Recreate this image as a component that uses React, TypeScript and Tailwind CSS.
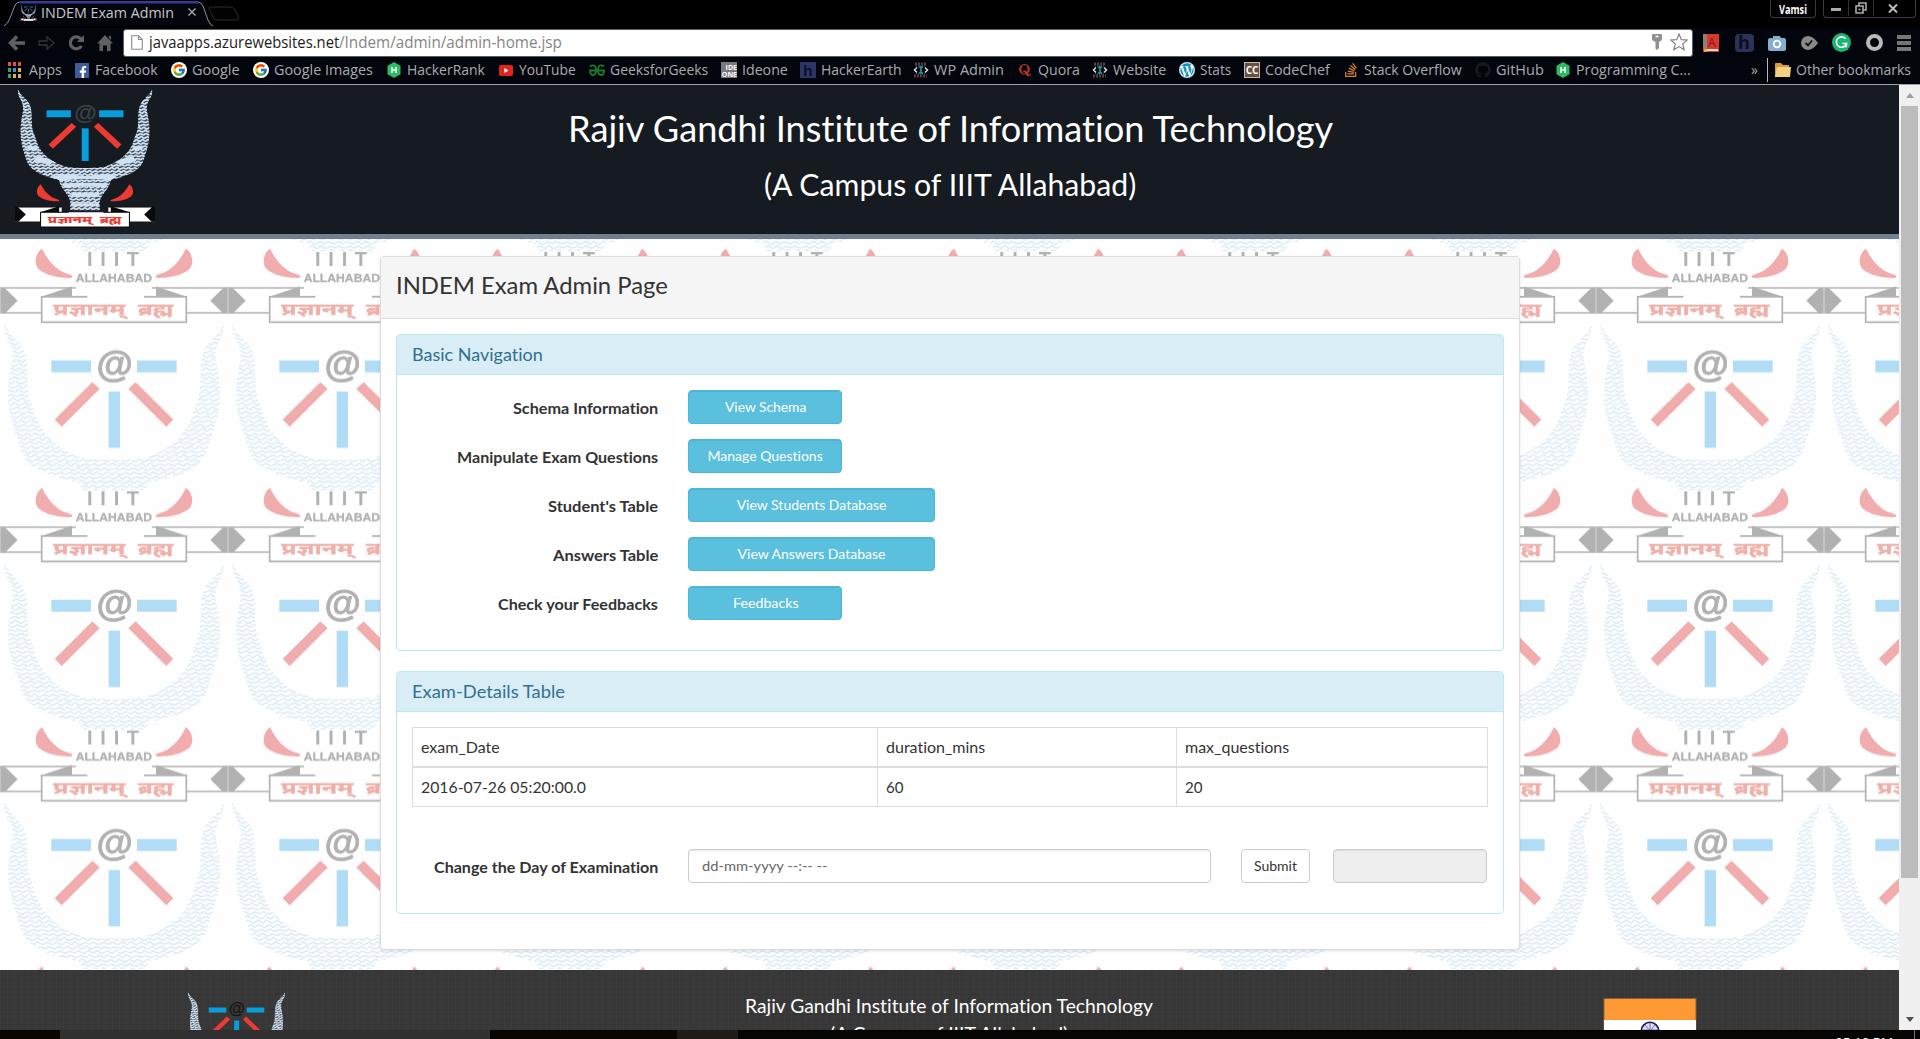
import { useLayoutEffect, useRef, useState, useId } from 'react';
import type { ReactNode } from 'react';
import { FaFacebookF, FaWordpress, FaStackOverflow, FaGithub, FaQuora } from 'react-icons/fa';
import { FcGoogle } from 'react-icons/fc';

/** Text squeezed or stretched to a given width. */
function Fit({ w, className = '', children }: { w: number; className?: string; children: ReactNode }) {
  const ref = useRef<HTMLSpanElement>(null);
  const [k, setK] = useState(1);
  useLayoutEffect(() => {
    if (ref.current && ref.current.offsetWidth) setK(w / ref.current.offsetWidth);
  }, [w]);
  return (
    <span className="inline-block shrink-0 whitespace-nowrap" style={{ width: w }}>
      <span ref={ref} className={'inline-block origin-left whitespace-nowrap ' + className} style={{ transform: `scaleX(${k})` }}>
        {children}
      </span>
    </span>
  );
}

type Palette = { gray: string; red: string; blue: string; wave: string; ribbon: string; text: string; at: string; name: boolean };
const faded: Palette = { gray: '#b1b1b1', red: '#f1adad', blue: '#b0dcf6', wave: '#dfebf7', ribbon: '#ffffff', text: '#f0b0aa', at: '#b1b1b1', name: true };
const vivid: Palette = { gray: '#0a0a0a', red: '#ee3a32', blue: '#0a9ddb', wave: '#cfe1f3', ribbon: '#ffffff', text: '#ee3a32', at: '#3c4246', name: false };

function waveRows(step: number) {
  const rows: string[] = [];
  for (let y = -6, i = 0; y < 640; y += step, i++) {
    let d = `M${-((i * 23) % 56)} ${y}`;
    for (let x = 0; x < 14; x++) {
      const a = 5 + ((i * 7 + x * 5) % 4);
      d += ` q7 ${-a} 14 0 q8 ${a} 13 -1 q6 ${-a} 12 1 q9 ${a} 17 0`;
    }
    rows.push(d);
  }
  return rows.join(' ');
}

/** Institute crest, drawn on a 684 x 718 grid. */
function Crest({ p, motto = true }: { p: Palette; motto?: boolean }) {
  const id = 'c' + useId().replace(/[^a-zA-Z0-9]/g, '');
  const half = 'M14 0 C24 34 60 50 72 80 C92 130 70 190 98 245 C110 290 125 335 190 375 C240 410 290 408 342 408 L342 ';
  const horn = p.name
    ? half + '500 L250 500 L235 474 C180 470 90 440 66 390 C50 330 22 280 24 200 C26 130 50 100 30 60 C18 40 10 20 14 0Z'
    : half + '628 L270 628 L270 580 C260 540 225 520 215 470 C150 455 85 430 60 380 C45 330 22 280 28 190 C32 130 50 100 30 60 C18 40 10 20 14 0Z';
  const eye = 'M126 492 C104 508 102 540 116 554 C140 575 185 581 212 580 C222 578 216 571 206 569 C170 560 145 530 126 492Z';
  const mirror = 'translate(684 0) scale(-1 1)';
  const side = (
    <>
      <path d={eye} fill={p.red} />
      <path d="M0 610H228V637H125V685H0Z" fill={p.ribbon} />
      <path d={p.name ? 'M0 610H228M0 685H125' : 'M0 610H228'} stroke={p.gray} strokeWidth={4.5} fill="none" />
      <path d="M122 637L216 606V637Z" fill={p.gray} />
      <path d="M0 610H14L53 648L16 686H0Z" fill={p.gray} />
      <path d="M154 110H273V146H154Z" fill={p.blue} />
      <path d="M277 175L299 195L185 309L164 287Z" fill={p.red} />
    </>
  );
  return (
    <g>
      <clipPath id={id}>
        <path d={horn} />
        <path d={horn} transform={mirror} />
      </clipPath>
      <g clipPath={`url(#${id})`}>
        {!p.name && <path d={horn} fill="#aabccd" opacity={0.3} />}
        {!p.name && <path d={horn} fill="#aabccd" opacity={0.3} transform={mirror} />}
        <path d={waveRows(p.name ? 13 : 16)} stroke={p.wave} strokeWidth={p.name ? 5 : 9} fill="none" />
        {!p.name && (
          <path
            d="M180 448Q260 436 342 450Q430 438 500 446L470 472Q342 456 215 474ZM225 492Q342 478 455 490L440 508Q342 496 245 510ZM110 345L190 372L170 392L90 372ZM574 345L494 372L514 392L594 372ZM60 290L105 300L112 318L60 310ZM624 290L579 300L572 318L624 310ZM275 535H410V556H275ZM275 590H410V606H275Z"
            fill={p.wave}
          />
        )}
      </g>
      {side}
      <g transform={mirror}>{side}</g>
      {p.name && <path d="M0 608V688M684 608V688" stroke="#d8d8d8" strokeWidth={3} />}
      <path d="M326 203H360V372H326Z" fill={p.blue} />
      <text x={344} y={160} textAnchor="middle" fontFamily="Liberation Sans" fontWeight={700} fontSize={112} fill={p.at} stroke={p.at} strokeWidth={p.name ? 2.5 : 0}>@</text>
      {p.name && (
        <>
          <text x="261 301 341 380" y={543} fontFamily="Liberation Sans" fontWeight={700} fontSize={60} fill={p.gray}>IIIT</text>
          <text x={227} y={591} textLength={229} lengthAdjust="spacingAndGlyphs" fontFamily="Liberation Sans" fontWeight={700} fontSize={34} fill={p.gray} stroke={p.gray} strokeWidth={0.8}>ALLAHABAD</text>
        </>
      )}
      <path d="M125 637H559V713H125Z" fill={p.ribbon} />
      <path d="M262 637H125V713H559V637H432" stroke={p.gray} strokeWidth={5} fill="none" />
      {motto && (
        <g fontFamily="Noto Sans, Noto Sans Devanagari, sans-serif" fontWeight={700} fontSize={46} fill={p.text} stroke={p.text} strokeWidth={1}>
          <text x={160} y={690} textLength={216} lengthAdjust="spacingAndGlyphs">प्रज्ञानम्</text>
          <text x={414} y={690} textLength={106} lengthAdjust="spacingAndGlyphs">ब्रह्म</text>
        </g>
      )}
    </g>
  );
}

function Backdrop() {
  return (
    <svg className="absolute inset-0 h-full w-full" aria-hidden="true">
      <defs>
        <pattern id="crest-tile" width={228} height={239.3} y={-154.5} patternUnits="userSpaceOnUse">
          <g transform="scale(0.33333)">
            <Crest p={faded} />
          </g>
        </pattern>
      </defs>
      <rect width="100%" height="100%" fill="#fefefe" />
      <rect width="100%" height="100%" fill="url(#crest-tile)" />
    </svg>
  );
}

const Hex = () => (
  <svg width="16" height="16" viewBox="0 0 16 16"><path d="M8 0L14.5 3.7V12.3L8 16L1.5 12.3V3.7Z" fill="#2ebc62" /><path d="M6 5V11M10 5V11M6 8H10" stroke="#fff" strokeWidth="1.5" /></svg>
);
const GoogleIcon = () => (
  <span className="flex h-4 w-4 items-center justify-center rounded-full bg-white"><FcGoogle size={14} /></span>
);
const CodeIcon = () => (
  <svg width="16" height="16" viewBox="0 0 16 16">
    <path d="M2 2H14M1 14H14" stroke="#5a3c42" strokeWidth="3" strokeDasharray="2 1" />
    <path d="M3 4H13M3 12H13" stroke="#4a4a50" strokeWidth="1.5" strokeDasharray="1 1" />
    <path d="M4 5.5L1.5 8L4 10.5M12 5.5L14.5 8L12 10.5" stroke="#ddd" strokeWidth="1.5" fill="none" />
    <path d="M6 5H10M8 5V11M6 11H10" stroke="#16a8a0" strokeWidth="1.6" />
  </svg>
);
const GeeksIcon = () => (
  <svg width="16" height="12" viewBox="0 0 16 12" fill="none" stroke="#1f7a2e" strokeWidth="1.8">
    <path d="M1 2.5Q3 .8 5 1.5Q7 2.5 7 6Q7 11 4 11Q1 11 1 6.5H15Q15 11 12 11Q9 11 9 6Q9 2.5 11 1.5Q13 .8 15 2.5" />
  </svg>
);
const AppsIcon = () => (
  <span className="grid grid-cols-3 gap-[2px]">
    {['bg-[#d8524a]', 'bg-[#d8524a]', 'bg-[#d8524a]', 'bg-[#3da35d]', 'bg-[#4a86d8]', 'bg-[#e0b040]', 'bg-[#3da35d]', 'bg-[#e0b040]', 'bg-[#e0b040]'].map((c, i) => (
      <span key={i} className={'h-[4px] w-[3px] ' + c} />
    ))}
  </span>
);

const bookmarks: { label: string; slot: number; w: number; icon: ReactNode }[] = [
  { label: 'Apps', slot: 66, w: 33, icon: <span className="-ml-1"><AppsIcon /></span> },
  { label: 'Facebook', slot: 97, w: 63, icon: <span className="flex h-[15px] w-[14px] items-end justify-end bg-[#3f5c9a] text-white"><FaFacebookF size={12} /></span> },
  { label: 'Google', slot: 82, w: 48, icon: <GoogleIcon /> },
  { label: 'Google Images', slot: 133, w: 99, icon: <GoogleIcon /> },
  { label: 'HackerRank', slot: 112, w: 78, icon: <Hex /> },
  { label: 'YouTube', slot: 91, w: 57, icon: <svg width="14" height="11" viewBox="0 0 14 11"><rect width="14" height="11" rx="2" fill="#e2231a" /><path d="M5.3 3V8L9.5 5.5Z" fill="#fff" /></svg> },
  { label: 'GeeksforGeeks', slot: 132, w: 98, icon: <GeeksIcon /> },
  { label: 'Ideone', slot: 79, w: 46, icon: <span className="flex h-4 w-4 flex-col items-end justify-end bg-[#77787a] text-[7px] leading-[7px] font-bold text-white"><span>IDE</span><span>ONE</span></span> },
  { label: 'HackerEarth', slot: 113, w: 80, icon: <span className="flex h-4 w-4 items-center justify-center bg-[#2c3566] text-[15px] font-bold text-[#0c1028]">h</span> },
  { label: 'WP Admin', slot: 104, w: 70, icon: <CodeIcon /> },
  { label: 'Quora', slot: 75, w: 42, icon: <FaQuora size={14} color="#b5301f" /> },
  { label: 'Website', slot: 87, w: 53, icon: <CodeIcon /> },
  { label: 'Stats', slot: 65, w: 31, icon: <span className="flex rounded-full bg-white text-[#1590c2]"><FaWordpress size={16} /></span> },
  { label: 'CodeChef', slot: 99, w: 65, icon: <span className="flex h-4 w-4 items-center justify-center border border-[#c8b8a8] bg-[#6a5040] text-[10px] font-bold text-white">CC</span> },
  { label: 'Stack Overflow', slot: 132, w: 98, icon: <FaStackOverflow size={16} color="#d8802e" /> },
  { label: 'GitHub', slot: 80, w: 48, icon: <FaGithub size={16} color="#16191d" /> },
  { label: 'Programming C...', slot: 140, w: 115, icon: <Hex /> },
];

function Chrome() {
  return (
    <div className="relative h-[85px] shrink-0 border-b border-[#9aa0a4] bg-[#02050c] font-['Open_Sans',sans-serif] text-[#a9acaf]">
      <div className="flex h-[28px] items-start justify-between bg-black">
        <div className="relative flex h-[24px] w-[250px] items-center">
          <svg className="absolute inset-0" width="250" height="27">
            <path d="M4 26Q8 24 10 18L15 5Q17 2 20 2H198Q201 2 203 6L208 20Q210 25 213 26" fill="#02050c" stroke="#8d9094" strokeWidth="1" />
            <path d="M19 2.5H199" stroke="#3038a8" strokeWidth="2" />
            <path d="M209 9Q208 7 212 7H230Q234 7 235 10L239 18Q239 20 236 20H218Q214 20 213 17Z" fill="#020202" stroke="#2c2c2c" />
          </svg>
          <div className="relative flex items-center">
            <svg className="ml-5" width="17" height="17" viewBox="0 0 684 718"><Crest p={vivid} motto={false} /></svg>
            <Fit w={133} className="ml-1 text-[15px] leading-[20px] text-[#c8c8c8]">INDEM Exam Admin</Fit>
            <svg className="ml-[18px]" width="8" height="8" viewBox="0 0 8 8"><path d="M0.5 0.5L7.5 7.5M7.5 0.5L0.5 7.5" stroke="#aaa" strokeWidth="1.4" /></svg>
          </div>
        </div>
        <div className="flex gap-[7px] pr-[4px]">
          <div className="flex h-[18px] w-[46px] items-center justify-center rounded-b border border-t-0 border-[#3c3c3c] pb-px text-white">
            <Fit w={28} className="text-[11.5px] leading-[15px] font-bold">Vamsi</Fit>
          </div>
          <div className="flex h-[18px] w-[93px] rounded-b border border-t-0 border-[#3c3c3c] pb-px text-[#aaa]">
            <span className="flex w-[25px] items-center justify-center border-r border-[#333]"><span className="mt-[3px] h-[3px] w-[10px] bg-[#aaa]" /></span>
            <span className="flex w-[25px] items-center justify-center border-r border-[#333]">
              <svg width="12" height="12" viewBox="0 0 12 12" fill="none" stroke="#aaa" strokeWidth="1.6"><path d="M1 4H8V11H1ZM4 4V1H11V8H8" /><path d="M3.5 7.5H5.5" /></svg>
            </span>
            <span className="flex flex-1 items-center justify-center pr-1">
              <svg width="10" height="9" viewBox="0 0 10 9"><path d="M1 0.5L9 8.5M9 0.5L1 8.5" stroke="#bbb" strokeWidth="2" /></svg>
            </span>
          </div>
        </div>
      </div>

      <div className="flex h-[29px] items-center">
        <div className="flex w-[123px] shrink-0 items-center gap-[12px] pl-[8px]">
          <svg width="18" height="16" viewBox="0 0 18 16"><path d="M9 1.5L2.5 8L9 14.5M3 8H17" stroke="#606060" strokeWidth="3.6" fill="none" /></svg>
          <svg width="18" height="16" viewBox="0 0 18 16"><path d="M1 6H9V2L16 8L9 14V10H1Z" stroke="#333" strokeWidth="1.3" fill="none" /></svg>
          <svg width="17" height="16" viewBox="0 0 17 16"><path d="M13 4A6 6 0 1 0 13.5 11" stroke="#606060" strokeWidth="3.2" fill="none" /><path d="M16 0V7H9Z" fill="#606060" /></svg>
          <svg width="16" height="16" viewBox="0 0 16 16"><path d="M8 0L16 8.5H13.5V16H10V10.5H6V16H2.5V8.5H0L8 0M12 1H14V5L12 3Z" fill="#606060" /></svg>
        </div>
        <div className="flex h-[28px] w-[1570px] shrink-0 items-center rounded-[3px] border border-[#5a5e60] bg-white pr-[4px] pb-px pl-[7px]">
          <svg width="12" height="15" viewBox="0 0 12 15"><path d="M.7 .7H7.5L11.3 4.5V14.3H.7ZM7.5 .7V4.5H11.3" fill="#fff" stroke="#8a8a8a" strokeWidth="1.1" /></svg>
          <span className="ml-[6px]"><Fit w={190} className="text-[15.5px] leading-[22px] text-[#1c1c1c]">javaapps.azurewebsites.net</Fit></span>
          <Fit w={223} className="text-[15.5px] leading-[22px] text-[#858585]">/Indem/admin/admin-home.jsp</Fit>
          <span className="flex-1" />
          <svg className="mr-[8px]" width="10" height="16" viewBox="0 0 10 16"><path d="M1 0H9Q10 0 10 1V6L7 8V14L5 16L3.5 14.5V8L0 6V1Q0 0 1 0ZM3.5 1.8V3.2H6.5V1.8Z" fill="#8f8f8f" fillRule="evenodd" /></svg>
          <svg width="18" height="18" viewBox="0 0 18 18"><path d="M9 1L11.3 6.6L17.2 7L12.7 10.9L14.2 16.8L9 13.6L3.8 16.8L5.3 10.9L.8 7L6.7 6.6Z" fill="#fff" stroke="#7c7c7c" strokeWidth="1.1" /></svg>
        </div>
        <div className="flex flex-1 items-center justify-between pr-[9px] pl-[9px]">
          <svg width="18" height="18" viewBox="0 0 18 18"><path d="M1 0H17V18H1Z" fill="#d8382e" /><path d="M1 0H5V15H1Z" fill="#8c8078" /><path d="M2 15H16V17H2Z" fill="#ddd" /><path d="M2 15H5V18H2Z" fill="#e6b41e" /><text x="6" y="13" fontFamily="Open Sans" fontSize="12" fill="#8c1512">A</text></svg>
          <span className="flex h-[18px] w-[19px] items-center justify-center rounded-sm bg-[#2c3157] text-[18px] font-bold text-[#0b0e22]">h</span>
          <svg width="18" height="16" viewBox="0 0 18 16"><path d="M2 3H5V1H12L13 3H16Q18 3 18 5V14Q18 16 16 16H2Q0 16 0 14V5Q0 3 2 3Z" fill="#87aed0" /><circle cx="9" cy="9" r="3.3" fill="#87aed0" stroke="#fff" strokeWidth="1.8" /></svg>
          <svg width="17" height="14" viewBox="0 0 17 14"><path d="M7 0Q12 0 17 7Q12 14 7 14A7 7 0 0 1 7 0Z" fill="#898989" /><path d="M4.5 7L7 9.5L11 4.5" stroke="#111" strokeWidth="1.8" fill="none" /></svg>
          <span className="flex h-[19px] w-[19px] items-center justify-center rounded-full bg-[#19b573]">
            <svg width="13" height="13" viewBox="0 0 13 13"><path d="M10.5 2.6A5.2 5.2 0 1 0 11.6 7.5H7.5M11.6 7.5L11 11.5" stroke="#fff" strokeWidth="1.6" fill="none" /></svg>
          </span>
          <span className="h-[17px] w-[17px] rounded-full border-4 border-[#b9b9b9]" />
          <span className="flex flex-col gap-[2px]">
            <span className="h-[4px] w-[14px] bg-[#777]" /><span className="h-[4px] w-[14px] bg-[#777]" /><span className="h-[4px] w-[14px] bg-[#777]" />
          </span>
        </div>
      </div>

      <div className="flex h-[26px] items-center pl-[8px] text-[14.5px] leading-[20px]">
        {bookmarks.map((b) => (
          <div key={b.label} className="flex shrink-0 items-center gap-[5px]" style={{ width: b.slot }}>
            <span className="flex w-[16px] shrink-0 items-center justify-center">{b.icon}</span>
            <Fit w={b.w}>{b.label}</Fit>
          </div>
        ))}
        <span className="flex-1" />
        <span className="mr-[9px] text-[14px]">»</span>
        <span className="h-[24px] w-px bg-[#b8b8b8]" />
        <svg className="ml-[7px]" width="16" height="14" viewBox="0 0 16 14"><path d="M0 1Q0 0 1 0H6L8 2H14V14H0Z" fill="#d59c40" /><path d="M2 4H16L15 14H0Z" fill="#f5d083" /></svg>
        <span className="mr-[9px] ml-[5px]"><Fit w={115}>Other bookmarks</Fit></span>
      </div>
    </div>
  );
}

function Scrollbar() {
  return (
    <div className="flex w-[21px] shrink-0 flex-col items-center bg-[#f0f0f0]">
      <span className="flex h-[21px] items-center"><svg width="8" height="5" viewBox="0 0 8 5"><path d="M4 0L8 5H0Z" fill="#a0a0a0" /></svg></span>
      <span className="h-[772px] w-[17px] bg-[#bcbcbc]" />
      <span className="flex-1" />
      <span className="flex h-[22px] items-center"><svg width="8" height="5" viewBox="0 0 8 5"><path d="M4 5L8 0H0Z" fill="#505050" /></svg></span>
    </div>
  );
}

const navRows = [
  { label: 'Schema Information', lw: 145, button: 'View Schema', bw: 81, wide: false },
  { label: 'Manipulate Exam Questions', lw: 201, button: 'Manage Questions', bw: 115, wide: false },
  { label: "Student's Table", lw: 110, button: 'View Students Database', bw: 150, wide: true },
  { label: 'Answers Table', lw: 105, button: 'View Answers Database', bw: 148, wide: true },
  { label: 'Check your Feedbacks', lw: 160, button: 'Feedbacks', bw: 66, wide: false },
];

function InfoPanel({ title, tw, className, children }: { title: string; tw: number; className: string; children: ReactNode }) {
  return (
    <section className={'rounded border border-[#bce8f1] bg-white ' + className}>
      <h2 className="h-[40px] border-b border-[#bce8f1] bg-[#d9edf7] px-[15px] text-[18px] leading-[38px] text-[#31708f]"><Fit w={tw}>{title}</Fit></h2>
      {children}
    </section>
  );
}

export default function App() {
  return (
    <div className="flex h-[1039px] w-[1920px] flex-col overflow-hidden bg-black font-['Lato',sans-serif] text-[#333] [font-variant-ligatures:none]">
      <Chrome />
      <div className="flex h-[945px] shrink-0">
        <div className="flex w-[1899px] flex-col overflow-hidden">
          <header className="relative h-[154px] shrink-0 border-b-[5px] border-[#708090] bg-[#151b20] pt-[20px] pr-[2px] text-center text-white">
            <svg className="absolute top-[4px] left-[15px]" width="140" height="139" viewBox="0 0 684 718" preserveAspectRatio="none"><Crest p={vivid} /></svg>
            <h1 className="h-[46px] text-[36px] leading-[46px]"><Fit w={765}>Rajiv Gandhi Institute of Information Technology</Fit></h1>
            <h2 className="mt-[12px] h-[42px] text-[30px] leading-[42px]"><Fit w={372}>(A Campus of IIIT Allahabad)</Fit></h2>
          </header>

          <main className="relative h-[731px] shrink-0 pt-[17px]">
            <Backdrop />
            <div className="relative ml-[380px] h-[694px] w-[1140px] rounded border border-[#ddd] bg-white shadow-sm">
              <div className="h-[62px] border-b border-[#ddd] bg-[#f5f5f5] px-[15px] text-[24px] leading-[55px]"><Fit w={272}>INDEM Exam Admin Page</Fit></div>
              <div className="px-[15px] pt-[15px]">
                <InfoPanel title="Basic Navigation" tw={131} className="h-[317px]">
                  <div className="flex flex-col gap-[15px] pt-[15px]">
                    {navRows.map((r) => (
                      <div key={r.label} className="flex h-[34px] items-start">
                        <div className="flex w-[261px] justify-end pt-[6px] text-[16px] leading-[23px] font-bold"><Fit w={r.lw}>{r.label}</Fit></div>
                        <button className={(r.wide ? 'w-[247px]' : 'w-[154px]') + ' ml-[30px] flex h-[34px] items-center justify-center rounded border border-[#46b8da] bg-[#5bc0de] pb-px text-[14px] text-white shadow-[inset_0_1px_1px_rgba(0,0,0,0.075)]'}>
                          <Fit w={r.bw}>{r.button}</Fit>
                        </button>
                      </div>
                    ))}
                  </div>
                </InfoPanel>

                <InfoPanel title="Exam-Details Table" tw={153} className="mt-[20px] h-[243px]">
                  <table className="mt-[15px] ml-[15px] h-[80px] w-[1076px] table-fixed border-collapse text-[16px] leading-[24px] [&_td]:border [&_td]:border-[#ddd] [&_td]:px-2 [&_td]:py-0">
                    <colgroup><col className="w-[465px]" /><col className="w-[299px]" /><col /></colgroup>
                    <tbody>
                      <tr className="h-[39px] border-b-2 border-[#ddd]">
                        <td><Fit w={79}>exam_Date</Fit></td>
                        <td><Fit w={99}>duration_mins</Fit></td>
                        <td><Fit w={104}>max_questions</Fit></td>
                      </tr>
                      <tr className="h-[39px]">
                        <td><Fit w={165}>2016-07-26 05:20:00.0</Fit></td>
                        <td><Fit w={18}>60</Fit></td>
                        <td><Fit w={18}>20</Fit></td>
                      </tr>
                    </tbody>
                  </table>
                  <div className="mt-[42px] flex h-[34px]">
                    <div className="flex w-[261px] justify-end pt-[6px] text-[16px] leading-[23px] font-bold"><Fit w={224}>Change the Day of Examination</Fit></div>
                    <div className="ml-[30px] flex h-[34px] w-[523px] items-center rounded border border-[#ccc] bg-white px-[13px] pb-px text-[14px] text-[#666] shadow-[inset_0_1px_1px_rgba(0,0,0,0.075)]">
                      <Fit w={126}>dd-mm-yyyy --:-- --</Fit>
                    </div>
                    <button className="ml-[30px] flex h-[34px] w-[69px] items-center justify-center rounded border border-[#ccc] bg-white pb-px text-[14px] text-[#333]"><Fit w={43}>Submit</Fit></button>
                    <div className="ml-[23px] h-[34px] w-[154px] rounded border border-[#ccc] bg-[#eee] shadow-[inset_0_1px_1px_rgba(0,0,0,0.075)]" />
                  </div>
                </InfoPanel>
              </div>
            </div>
          </main>

          <footer className="relative h-[60px] shrink-0 overflow-hidden bg-[#383838] bg-[repeating-linear-gradient(90deg,rgba(255,255,255,0.02)_0_1px,transparent_1px_7px),repeating-linear-gradient(0deg,rgba(0,0,0,0.05)_0_1px,transparent_1px_5px)] pt-[21px] pr-[2px] text-center text-[20px] leading-[28px] text-white">
            <svg className="absolute top-[22px] left-[186px]" width="101" height="101" viewBox="0 0 684 718" preserveAspectRatio="none"><Crest p={{ ...vivid, at: '#141414' }} motto={false} /></svg>
            <p><Fit w={408}>Rajiv Gandhi Institute of Information Technology</Fit></p>
            <p><Fit w={238}>(A Campus of IIIT Allahabad)</Fit></p>
            <svg className="absolute top-[27px] left-[1602px]" width="96" height="40">
              <rect x="1.5" y="1" width="93" height="40" fill="#ff9933" opacity="0.4" />
              <rect x="2.5" y="2" width="91" height="21" fill="#ff9933" />
              <rect x="2" y="23" width="92" height="20" fill="#fff" />
              <circle cx="48" cy="34" r="8.7" fill="#dcdcf2" stroke="#151560" strokeWidth="1.6" />
              <path d="M48 26V40M43 28L48 34L53 28M40 33H56" stroke="#5a5aa8" strokeWidth=".8" fill="none" />
            </svg>
          </footer>
        </div>
        <Scrollbar />
      </div>
      <div className="flex h-[9px] shrink-0 overflow-hidden bg-[#070504]">
        <span className="w-[60px] bg-[#080503]" />
        <span className="w-[430px] bg-[#303030]" />
        <span className="w-[187px] bg-[#080503]" />
        <span className="w-[61px] bg-[#1f1b18]" />
        <span className="flex-1" />
        <span className="mt-[4px] font-['Open_Sans',sans-serif] text-[13px] leading-[16px] text-white"><Fit w={58}>05:10 PM</Fit></span>
        <span className="mr-[5px] ml-[21px] w-px bg-[#777]" />
      </div>
    </div>
  );
}
